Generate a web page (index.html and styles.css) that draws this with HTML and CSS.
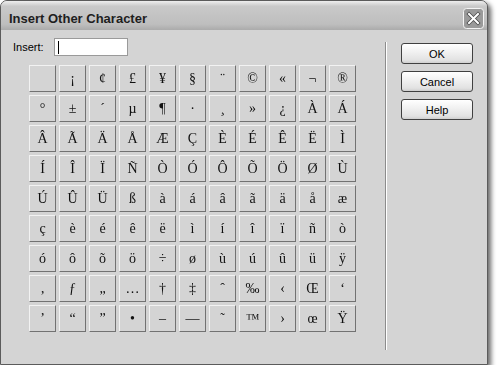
FILE: index.html
```html
<!DOCTYPE html>
<html lang="en">
<head>
    <meta charset="UTF-8">
    <title>Insert Other Character</title>
    <link rel="stylesheet" href="styles.css">
</head>
<body>
    <div class="window">
        <div class="titlebar">
            <span class="title">Insert Other Character</span>
            <div class="close">
                <svg width="21" height="21" viewBox="0 0 21 21">
                    <rect x="0.5" y="0.5" width="20" height="20" rx="3" fill="#9a9a9a" stroke="#f4f4f4"/>
                    <path d="M6 6 L15 15 M15 6 L6 15" stroke="#4a4a4a" stroke-width="3.6" stroke-linecap="square"/>
                    <path d="M6 6 L15 15 M15 6 L6 15" stroke="#ffffff" stroke-width="2" stroke-linecap="square"/>
                </svg>
            </div>
        </div>
        <div class="client">
            <div class="main">
                <div class="insert-row">
                    <label>Insert:</label>
                    <div class="field"><span class="caret"></span></div>
                </div>
                <div class="charmap">
                    <div class="cell">&nbsp;</div><div class="cell">¡</div><div class="cell">¢</div><div class="cell">£</div><div class="cell">¥</div><div class="cell">§</div><div class="cell">¨</div><div class="cell">©</div><div class="cell">«</div><div class="cell">¬</div><div class="cell">®</div>
                    <div class="cell">°</div><div class="cell">±</div><div class="cell">´</div><div class="cell">µ</div><div class="cell">¶</div><div class="cell">·</div><div class="cell">¸</div><div class="cell">»</div><div class="cell">¿</div><div class="cell">À</div><div class="cell">Á</div>
                    <div class="cell">Â</div><div class="cell">Ã</div><div class="cell">Ä</div><div class="cell">Å</div><div class="cell">Æ</div><div class="cell">Ç</div><div class="cell">È</div><div class="cell">É</div><div class="cell">Ê</div><div class="cell">Ë</div><div class="cell">Ì</div>
                    <div class="cell">Í</div><div class="cell">Î</div><div class="cell">Ï</div><div class="cell">Ñ</div><div class="cell">Ò</div><div class="cell">Ó</div><div class="cell">Ô</div><div class="cell">Õ</div><div class="cell">Ö</div><div class="cell">Ø</div><div class="cell">Ù</div>
                    <div class="cell">Ú</div><div class="cell">Û</div><div class="cell">Ü</div><div class="cell">ß</div><div class="cell">à</div><div class="cell">á</div><div class="cell">â</div><div class="cell">ã</div><div class="cell">ä</div><div class="cell">å</div><div class="cell">æ</div>
                    <div class="cell">ç</div><div class="cell">è</div><div class="cell">é</div><div class="cell">ê</div><div class="cell">ë</div><div class="cell">ì</div><div class="cell">í</div><div class="cell">î</div><div class="cell">ï</div><div class="cell">ñ</div><div class="cell">ò</div>
                    <div class="cell">ó</div><div class="cell">ô</div><div class="cell">õ</div><div class="cell">ö</div><div class="cell">÷</div><div class="cell">ø</div><div class="cell">ù</div><div class="cell">ú</div><div class="cell">û</div><div class="cell">ü</div><div class="cell">ÿ</div>
                    <div class="cell">‚</div><div class="cell">ƒ</div><div class="cell">„</div><div class="cell">…</div><div class="cell">†</div><div class="cell">‡</div><div class="cell">ˆ</div><div class="cell">‰</div><div class="cell">‹</div><div class="cell">Œ</div><div class="cell">‘</div>
                    <div class="cell">’</div><div class="cell">“</div><div class="cell">”</div><div class="cell">•</div><div class="cell">–</div><div class="cell">—</div><div class="cell">˜</div><div class="cell">™</div><div class="cell">›</div><div class="cell">œ</div><div class="cell">Ÿ</div>
                </div>
            </div>
            <div class="separator"></div>
            <div class="actions">
                <button class="btn">OK</button>
                <button class="btn">Cancel</button>
                <button class="btn">Help</button>
            </div>
        </div>
    </div>
</body>
</html>
```

FILE: styles.css
```css
body {
    margin: 0;
    background-color: #fff;
    font-family: "Liberation Sans", Arial, sans-serif;
    font-size: 11px;
    color: #000;
}
.window {
    width: 486px;
    height: 363px;
    border: 1px solid #5b5b5b;
    border-radius: 7px 7px 0 0;
    background-color: #d4d4d4;
    box-shadow: 3px 3px 5px rgba(0, 0, 0, 0.6);
    display: flex;
    flex-direction: column;
    overflow: hidden;
}
.titlebar {
    height: 24px;
    padding: 5px 3px 0 8px;
    display: flex;
    align-items: center;
    justify-content: space-between;
    background: linear-gradient(#eeeeee, #c9c9c9 18%, #bebebe 80%, #ababab);
}
.title {
    font-size: 13px;
    font-weight: bold;
    color: #1e1e1e;
}
.close {
    width: 21px;
    height: 21px;
    margin-top: 1px;
}
.client {
    flex: 1;
    display: flex;
}
.main {
    width: 384px;
    box-sizing: border-box;
    padding: 8px 0 0 12px;
}
.insert-row {
    display: flex;
    align-items: center;
    height: 18px;
}
.insert-row label {
    width: 41px;
}
.field {
    width: 74px;
    height: 18px;
    box-sizing: border-box;
    border: 1px solid #9a9a9a;
    background-color: #fff;
    padding: 2px 0 0 3px;
}
.caret {
    display: block;
    width: 1px;
    height: 13px;
    background-color: #000;
}
.charmap {
    margin: 9px 0 0 16px;
    display: grid;
    grid-template-columns: repeat(11, 27px);
    grid-auto-rows: 27px;
    gap: 3px;
    filter: grayscale(1);
}
.cell {
    box-sizing: border-box;
    border-top: 1px solid #f2f2f2;
    border-left: 1px solid #f2f2f2;
    border-right: 1px solid #727272;
    border-bottom: 1px solid #727272;
    display: flex;
    align-items: center;
    justify-content: center;
    font-family: "Liberation Serif", "Times New Roman", serif;
    font-size: 14px;
    color: #111;
}
.separator {
    width: 1px;
    height: 308px;
    margin-top: 12px;
    border-left: 1px solid #8c8c8c;
    background-color: #fff;
}
.actions {
    margin-left: 14px;
    padding-top: 13px;
    display: flex;
    flex-direction: column;
    gap: 7px;
}
.btn {
    width: 72px;
    height: 21px;
    border: 1px solid #404040;
    border-radius: 3px;
    background: linear-gradient(#ffffff, #f0f0f0 45%, #e2e2e2 85%, #cfcfcf);
    font-family: "Liberation Sans", Arial, sans-serif;
    font-size: 11px;
    color: #000;
    padding: 0;
}
```
